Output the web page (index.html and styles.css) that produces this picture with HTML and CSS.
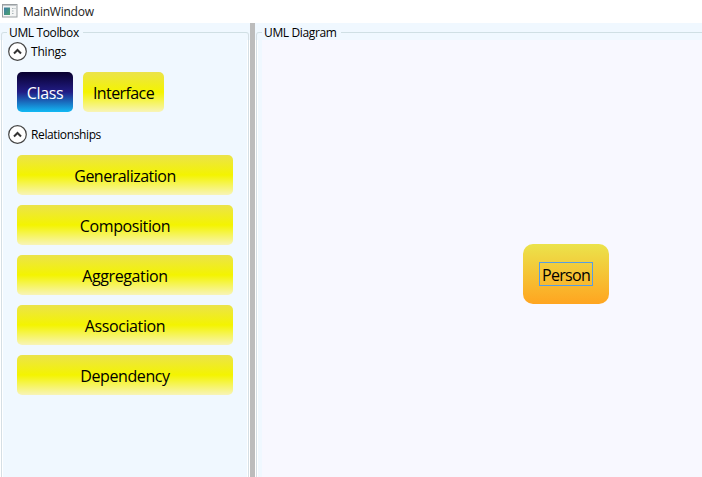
FILE: index.html
```html
<!DOCTYPE html>
<html lang="en">
<head>
<meta charset="utf-8">
<title>MainWindow</title>
<link rel="stylesheet" href="styles.css">
</head>
<body>
<header class="titlebar">
  <svg class="app-icon" width="16" height="14" viewBox="0 0 16 14">
    <defs><linearGradient id="pane" x1="0" y1="0" x2="1" y2="1"><stop offset="0" stop-color="#3c7ba8"/><stop offset="1" stop-color="#4ba36b"/></linearGradient></defs>
    <rect x=".5" y=".5" width="14.5" height="12.5" fill="#f4f5f5" stroke="#9a9fa2"/>
    <path d="M1 1.5h13.500" stroke="#c3c7ca"/>
    <rect x="2" y="3.500" width="6" height="7.500" fill="url(#pane)"/>
    <path d="M10 4.500h1.500M12.500 4.500h1M10 7h1.500M10 9.500h1.500" stroke="#a9b4b8"/>
  </svg>
  <span class="window-name">MainWindow</span>
</header>
<main class="workspace">
  <section class="panel toolbox">
    <div class="group-heading"><span class="heading-text">UML Toolbox</span></div>
    <div class="group-body">
      <div class="expander expander-things">
        <svg width="20" height="20" viewBox="0 0 20 20"><circle cx="9.500" cy="9.500" r="8.800" fill="#fff" stroke="#444" stroke-width="1.200"/><path d="M6 11.500l3.500-3.500 3.500 3.500" fill="none" stroke="#333" stroke-width="2"/></svg>
        <span class="expander-label">Things</span>
      </div>
      <div class="things">
        <div class="tile class-tile"><span>Class</span></div>
        <div class="tile interface-tile"><span>Interface</span></div>
      </div>
      <div class="expander">
        <svg width="20" height="20" viewBox="0 0 20 20"><circle cx="9.500" cy="9.500" r="8.800" fill="#fff" stroke="#444" stroke-width="1.200"/><path d="M6 11.500l3.500-3.500 3.500 3.500" fill="none" stroke="#333" stroke-width="2"/></svg>
        <span class="expander-label">Relationships</span>
      </div>
      <div class="relationships">
        <div class="tile"><span class="generalization">Generalization</span></div>
        <div class="tile"><span>Composition</span></div>
        <div class="tile"><span>Aggregation</span></div>
        <div class="tile"><span>Association</span></div>
        <div class="tile"><span>Dependency</span></div>
      </div>
    </div>
  </section>
  <div class="splitter"></div>
  <section class="panel diagram">
    <div class="group-heading"><span class="heading-text">UML Diagram</span></div>
    <div class="group-body">
      <div class="canvas">
        <div class="node"><span class="node-name">Person</span></div>
      </div>
    </div>
  </section>
</main>
</body>
</html>
```
FILE: styles.css
```css
* { box-sizing: border-box; }
body {
  margin: 0;
  width: 702px;
  height: 477px;
  overflow: hidden;
  display: flex;
  flex-direction: column;
  background: #fff;
  color: #000;
  font: 12px/18px "Open Sans", "Noto Sans", sans-serif;
  white-space: nowrap;
}
.titlebar {
  height: 23px;
  flex: none;
  display: flex;
  align-items: center;
  gap: 5px;
  padding-left: 2px;
}
.app-icon { flex: none; margin-top: -1px; }
.window-name { letter-spacing: -0.25px; color: #222; }
.workspace { flex: 1; display: flex; min-height: 0; }
.panel {
  background: #f0f8ff;
  display: flex;
  flex-direction: column;
}
.toolbox { width: 250px; flex: none; padding-left: 1px; padding-right: 1px; }
.diagram { flex: 1; padding-left: 1px; min-width: 0; }
.splitter { width: 5px; flex: none; background: #bcbcbc; }

/* The heading row carries the top edge of the group on both sides of its text */
.group-heading {
  height: 17px;
  flex: none;
  display: flex;
  align-items: flex-start;
}
.group-heading::before,
.group-heading::after {
  content: "";
  height: 8px;
  margin-top: 9px;
  border-top: 1px solid #d0dfe4;
}
.group-heading::before {
  width: 5px;
  border-left: 1px solid #d5dfe5;
  border-top-left-radius: 3px;
  margin-right: 2px;
}
.group-heading::after { flex: 1; margin-left: 4px; }
.toolbox .group-heading::after {
  border-right: 1px solid #d5dfe5;
  border-top-right-radius: 3px;
}
.heading-text { padding-top: 1px; letter-spacing: -0.36px; }
.group-body {
  flex: 1;
  border-left: 1px solid #d5dfe5;
  box-shadow: -1px 0 #fff, inset 1px 0 #fff;
}
.toolbox .group-body {
  border-right: 1px solid #d5dfe5;
  box-shadow: -1px 0 #fff, inset 1px 0 #fff, 1px 0 #fff, inset -1px 0 #fff;
}
.expander {
  display: flex;
  align-items: center;
  gap: 3px;
  height: 20px;
  padding-left: 6px;
}
.expander svg { flex: none; }
.expander-things { margin-top: 2px; }
.expander-label { letter-spacing: -0.38px; }
.expander-things .expander-label { letter-spacing: -0.2px; }
.things { display: flex; gap: 10px; padding: 10px 15px 13px; }
.relationships {
  display: flex;
  flex-direction: column;
  gap: 10px;
  padding: 10px 15px 0;
}
.tile {
  height: 40px;
  border-radius: 5px;
  display: flex;
  align-items: center;
  justify-content: center;
  padding-top: 2px;
  font-size: 16px;
  line-height: 22px;
  letter-spacing: -0.4px;
  background: linear-gradient(#ebe34b, #f4f400 50%, #f8f4b8);
}
.generalization { letter-spacing: -0.5px; }
.class-tile {
  width: 56px;
  color: #fff;
  background: linear-gradient(#08002e, #211c85 50%, #12baf5);
}
.interface-tile { width: 81px; letter-spacing: -0.6px; }
.relationships .tile { padding-top: 1px; }
.diagram .group-body { padding-left: 5px; }
.canvas {
  position: relative;
  height: 100%;
  background: #f8f8ff;
}
.node {
  position: absolute;
  left: 261px;
  top: 204px;
  width: 86px;
  height: 60px;
  border-radius: 10px;
  display: flex;
  align-items: center;
  justify-content: center;
  background: linear-gradient(#ebe34b, #ffa520);
}
.node-name {
  width: 54px;
  height: 24px;
  border: 1px solid #569de5;
  padding-top: 1px;
  text-align: center;
  font-size: 16px;
  line-height: 22px;
  letter-spacing: -0.7px;
}
```
